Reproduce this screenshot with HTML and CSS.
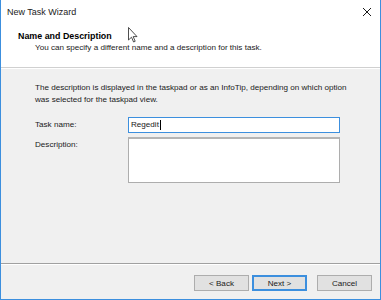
FILE: index.html
```html
<!DOCTYPE html>
<html lang="en">
<head>
  <meta charset="UTF-8">
  <title>New Task Wizard</title>
  <link rel="stylesheet" href="styles.css">
</head>
<body>
  <div class="window">
    <div class="title-bar">
      <span class="title-text">New Task Wizard</span>
      <span class="close-btn">
        <svg width="10" height="10" viewBox="0 0 10 10">
          <path d="M1 1 L9 9 M9 1 L1 9" stroke="#1a1a1a" stroke-width="1"/>
        </svg>
      </span>
    </div>

    <div class="wizard-header">
      <div class="header-title">Name and Description</div>
      <div class="header-sub">You can specify a different name and a description for this task.</div>
    </div>

    <div class="wizard-body">
      <p class="intro">The description is displayed in the taskpad or as an InfoTip, depending on which option was selected for the taskpad view.</p>

      <div class="form-row">
        <label class="field-label">Task name:</label>
        <div class="name-input">Regedit<span class="caret"></span></div>
      </div>
      <div class="form-row">
        <label class="field-label">Description:</label>
        <div class="desc-input"></div>
      </div>
    </div>

    <div class="wizard-footer">
      <button class="btn">&lt; Back</button>
      <button class="btn btn-default">Next &gt;</button>
      <button class="btn btn-cancel">Cancel</button>
    </div>

    <svg class="pointer" width="10" height="17" viewBox="0 0 10 17">
      <path d="M0.5 0.5 L0.5 13 L3.5 10.2 L5.6 15 L7.2 14.3 L5.2 9.6 L9 9.6 Z" fill="#fff" stroke="#222" stroke-width="0.8" stroke-linejoin="round"/>
    </svg>
  </div>
</body>
</html>
```

FILE: styles.css
```css
* {
  box-sizing: border-box;
}

html, body {
  margin: 0;
  padding: 0;
}

body {
  font-family: 'Liberation Sans', Arial, sans-serif;
  font-size: 8.1px;
  color: #1a1a1a;
  background: #ffffff;
}

.window {
  position: relative;
  width: 381px;
  height: 300px;
  border: 1px solid #3c8fde;
  border-top: none;
  background: #f0f0f0;
  display: flex;
  flex-direction: column;
}

.title-bar {
  height: 24px;
  background: #ffffff;
  display: flex;
  align-items: center;
  justify-content: space-between;
  padding: 0 8px 0 6px;
}

.title-text {
  font-size: 9px;
  color: #222;
}

.close-btn {
  display: flex;
  align-items: center;
}

.wizard-header {
  background: #ffffff;
  height: 44px;
  padding: 6px 0 0 17px;
  border-bottom: 1px solid #d0d0d0;
  box-shadow: 0 1px 0 #ffffff;
}

.header-title {
  font-weight: 700;
  font-size: 8.9px;
  color: #000;
  line-height: 12px;
}

.header-sub {
  padding-left: 17px;
  line-height: 12px;
}

.wizard-body {
  flex: 1;
  padding: 14px 12px 0 34px;
}

.intro {
  max-width: 318px;
  margin: 0 0 11px 0;
  line-height: 12px;
}

.form-row {
  display: flex;
  align-items: flex-start;
  margin-bottom: 4px;
}

.field-label {
  width: 93px;
  line-height: 15px;
}

.name-input {
  width: 212px;
  height: 16px;
  background: #ffffff;
  border: 1px solid #3c8fde;
  padding: 0 2px;
  line-height: 14px;
  display: flex;
  align-items: center;
}

.caret {
  display: inline-block;
  width: 1px;
  height: 10px;
  background: #000;
  margin-left: 1px;
}

.desc-input {
  width: 212px;
  height: 46px;
  background: #ffffff;
  border: 1px solid #adadad;
  border-top: 2px solid #b5b5b5;
}

.wizard-footer {
  height: 36px;
  border-top: 1px solid #a0a0a0;
  box-shadow: inset 0 1px 0 #ffffff;
  display: flex;
  justify-content: flex-end;
  align-items: flex-start;
  padding: 11px 8px 0 0;
  gap: 3px;
}

.btn {
  width: 55px;
  height: 16px;
  padding: 0;
  font-family: 'Liberation Sans', Arial, sans-serif;
  font-size: 8.1px;
  color: #1a1a1a;
  background: #e1e1e1;
  border: 1px solid #adadad;
}

.btn-default {
  border: 1px solid #3c8fde;
  box-shadow: inset 0 0 0 1px #3c8fde;
}

.btn-cancel {
  margin-left: 7px;
}

.pointer {
  position: absolute;
  left: 127px;
  top: 27px;
}
```
